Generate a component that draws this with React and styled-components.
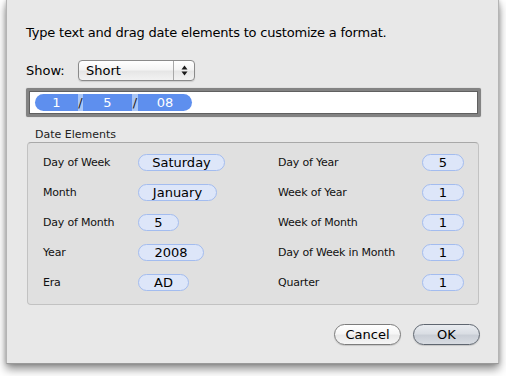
import React from "react";
import styled, { createGlobalStyle } from "styled-components";

const Global = createGlobalStyle`
  html, body { margin: 0; padding: 0; background: #ffffff; }
  body { font-family: "DejaVu Sans", "Liberation Sans", sans-serif; color: #000; }
`;

const Page = styled.div`
  width: 506px;
  height: 376px;
  padding-left: 6px;
  box-sizing: border-box;
  overflow: hidden;
`;

const Sheet = styled.div`
  width: 493px;
  height: 364px;
  box-sizing: border-box;
  background: #e8e8e8;
  border-left: 1px solid #b4b4b4;
  border-right: 1px solid #b4b4b4;
  border-bottom: 1px solid #9a9a9a;
  box-shadow: 0 5px 9px rgba(0, 0, 0, 0.45), 0 0 4px rgba(0, 0, 0, 0.2);
  padding: 25px 18px 0 19px;
  display: flex;
  flex-direction: column;
`;

const Title = styled.div`
  font-size: 13px;
  line-height: 16px;
  height: 16px;
  letter-spacing: -0.2px;
`;

const ShowRow = styled.div`
  margin-top: 19px;
  display: flex;
  align-items: center;
  height: 21px;
`;

const Label = styled.span`
  font-size: 13px;
  width: 52px;
`;

const Popup = styled.div`
  width: 117px;
  height: 21px;
  box-sizing: border-box;
  border: 1px solid #8a8a8a;
  border-radius: 4px;
  background: linear-gradient(#ffffff 0%, #f4f4f4 45%, #e6e6e6 55%, #f2f2f2 100%);
  display: flex;
  align-items: stretch;
  box-shadow: 0 1px 1px rgba(0,0,0,0.12);
`;

const PopupText = styled.span`
  flex: 1;
  padding-left: 7px;
  font-size: 13px;
  line-height: 19px;
`;

const PopupArrows = styled.span`
  width: 20px;
  border-left: 1px solid #a8a8a8;
  display: flex;
  align-items: center;
  justify-content: center;
`;

const TokenField = styled.div`
  margin-top: 7px;
  width: 455px;
  height: 29px;
  box-sizing: border-box;
  border: 3px solid #838383;
  box-shadow: inset 0 0 0 1px #606060, 0 0 1px #999;
  border-radius: 2px;
  background: #ffffff;
  padding: 3px 0 0 6px;
  display: flex;
`;

const TokenRow = styled.div`
  display: flex;
  height: 17px;
`;

const Token = styled.span`
  width: ${p => p.$w}px;
  height: 17px;
  background: ${p => (p.$sep ? "#a9c6f6" : "#5e8fee")};
  color: ${p => (p.$sep ? "#1a1a1a" : "#ffffff")};
  border-radius: ${p => (p.$first ? "9px 0 0 9px" : p.$last ? "0 9px 9px 0" : "0")};
  font-size: 13px;
  line-height: 17px;
  text-align: center;
  box-sizing: border-box;
`;

const GroupLabel = styled.div`
  margin-top: 11px;
  margin-left: 9px;
  font-size: 11px;
  line-height: 13px;
  color: #222;
`;

const Group = styled.div`
  margin-top: 1px;
  margin-left: 1px;
  width: 452px;
  height: 163px;
  box-sizing: border-box;
  background: #e0e0e0;
  border: 1px solid #c2c2c2;
  border-top-color: #a8a8a8;
  border-radius: 4px;
  padding: 11px 14px 0 15px;
  display: grid;
  grid-template-columns: 235px 1fr;
  grid-auto-rows: 30px;
`;

const Cell = styled.div`
  display: flex;
  align-items: flex-start;
  justify-content: ${p => (p.$right ? "space-between" : "flex-start")};
`;

const ElemLabel = styled.span`
  font-size: 11px;
  line-height: 17px;
  letter-spacing: -0.2px;
  width: ${p => (p.$w ? p.$w + "px" : "auto")};
  color: #111;
`;

const Pill = styled.span`
  width: ${p => p.$w}px;
  height: 17px;
  box-sizing: border-box;
  border: 1px solid #a3bcef;
  background: #dde6f9;
  border-radius: 9px;
  font-size: 13px;
  line-height: 15px;
  text-align: center;
  color: #000;
`;

const Buttons = styled.div`
  margin-top: 19px;
  display: flex;
  justify-content: flex-end;
  gap: 12px;
`;

const Button = styled.button`
  width: 67px;
  height: 21px;
  box-sizing: border-box;
  border-radius: 11px;
  font-family: "DejaVu Sans", sans-serif;
  font-size: 13px;
  line-height: 17px;
  padding: 0;
  color: #000;
  border: 1px solid ${p => (p.$default ? "#5f6670" : "#7c7c7c")};
  background: ${p =>
    p.$default
      ? "linear-gradient(#e9ecf0 0%, #dadee4 45%, #c9ced6 55%, #d8dce2 100%)"
      : "linear-gradient(#ffffff 0%, #f6f6f6 45%, #e9e9e9 55%, #f6f6f6 100%)"};
  box-shadow: 0 1px 1px rgba(0,0,0,0.15);
`;

const left = [
  ["Day of Week", "Saturday", 87],
  ["Month", "January", 79],
  ["Day of Month", "5", 41],
  ["Year", "2008", 66],
  ["Era", "AD", 51],
];
const right = [
  ["Day of Year", "5"],
  ["Week of Year", "1"],
  ["Week of Month", "1"],
  ["Day of Week in Month", "1"],
  ["Quarter", "1"],
];

const tokens = [
  { t: "1", w: 43, first: true },
  { t: "/", w: 5, sep: true },
  { t: "5", w: 49 },
  { t: "/", w: 6, sep: true },
  { t: "08", w: 54, last: true },
];

export default function App() {
  return (
    <Page>
      <Global />
      <Sheet>
        <Title>Type text and drag date elements to customize a format.</Title>
        <ShowRow>
          <Label>Show:</Label>
          <Popup>
            <PopupText>Short</PopupText>
            <PopupArrows>
              <svg width="7" height="11" viewBox="0 0 7 11">
                <path d="M3.5 0.5 L6.5 4.5 L0.5 4.5 Z" fill="#1a1a1a" />
                <path d="M3.5 10.5 L6.5 6.5 L0.5 6.5 Z" fill="#1a1a1a" />
              </svg>
            </PopupArrows>
          </Popup>
        </ShowRow>
        <TokenField>
          <TokenRow>
            {tokens.map((k, i) => (
              <Token key={i} $w={k.w} $sep={k.sep} $first={k.first} $last={k.last}>
                {k.t}
              </Token>
            ))}
          </TokenRow>
        </TokenField>
        <GroupLabel>Date Elements</GroupLabel>
        <Group>
          {left.map((l, i) => (
            <React.Fragment key={i}>
              <Cell>
                <ElemLabel $w={95}>{l[0]}</ElemLabel>
                <Pill $w={l[2]}>{l[1]}</Pill>
              </Cell>
              <Cell $right>
                <ElemLabel>{right[i][0]}</ElemLabel>
                <Pill $w={42}>{right[i][1]}</Pill>
              </Cell>
            </React.Fragment>
          ))}
        </Group>
        <Buttons>
          <Button>Cancel</Button>
          <Button $default>OK</Button>
        </Buttons>
      </Sheet>
    </Page>
  );
}
